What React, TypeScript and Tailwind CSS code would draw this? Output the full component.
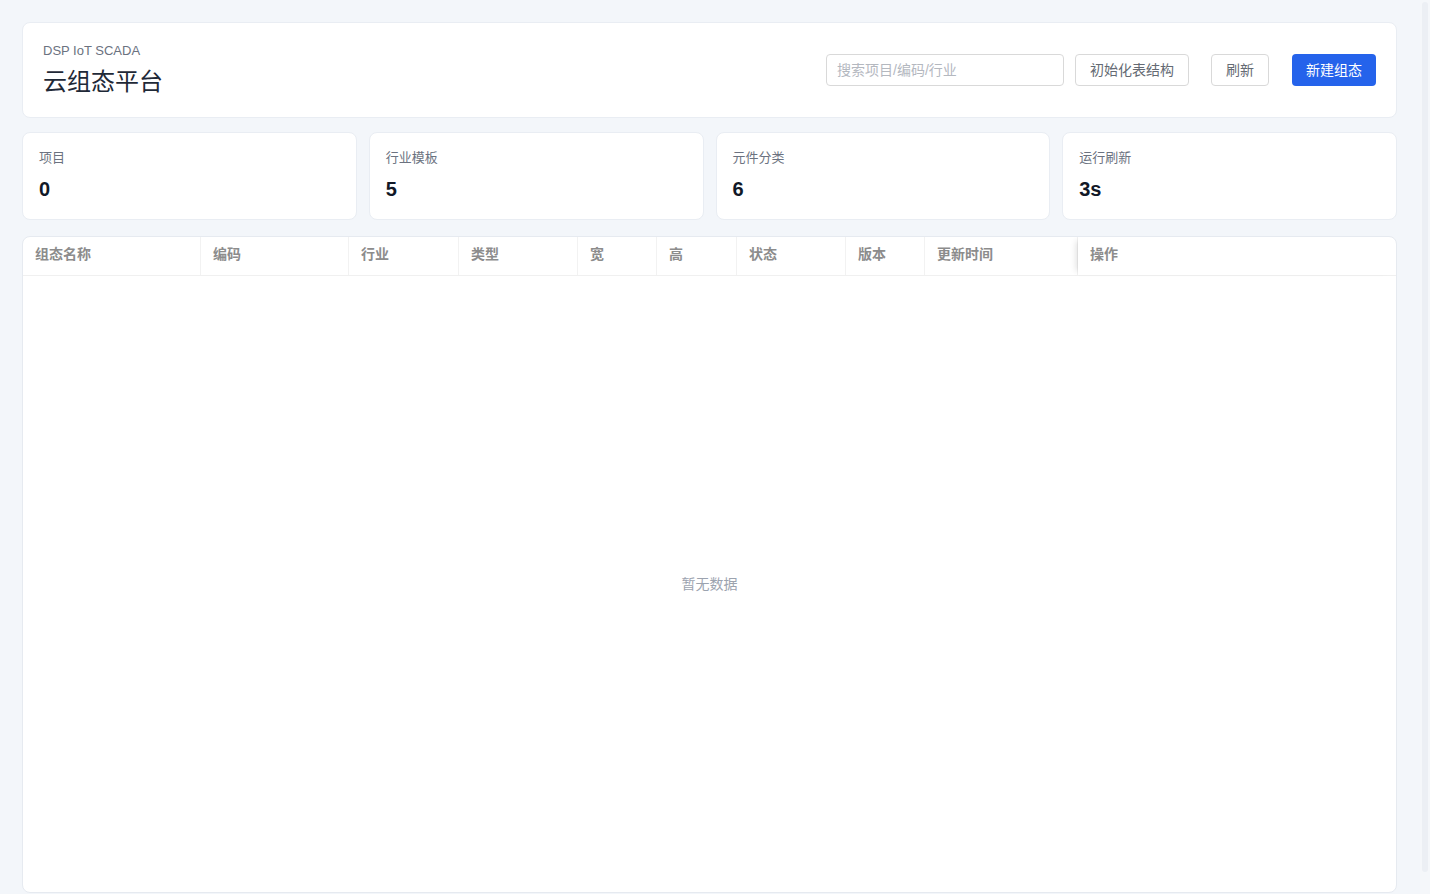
const columns = [
  { title: "组态名称", width: 178 },
  { title: "编码", width: 148 },
  { title: "行业", width: 110 },
  { title: "类型", width: 119 },
  { title: "宽", width: 79 },
  { title: "高", width: 80 },
  { title: "状态", width: 109 },
  { title: "版本", width: 79 },
  { title: "更新时间", width: 153 },
];

const stats = [
  { label: "项目", value: "0" },
  { label: "行业模板", value: "5" },
  { label: "元件分类", value: "6" },
  { label: "运行刷新", value: "3s" },
];

function StatCard({ label, value }: { label: string; value: string }) {
  return (
    <div className="flex h-[88px] flex-col rounded-lg border border-[#e9edf3] bg-white px-4 pt-[16px]">
      <div className="text-[13px] leading-[18px] text-[#6b7280]">{label}</div>
      <div className="mt-[8px] text-[20px] font-bold leading-[28px] text-[#111827]">{value}</div>
    </div>
  );
}

export default function App() {
  return (
    <div
      className="relative h-screen overflow-hidden bg-[#f3f6fa]"
      style={{ fontFamily: '"Liberation Sans", "Noto Sans CJK SC", sans-serif' }}
    >
      <div className="flex flex-col py-[22px] pl-[22px] pr-[33px]">
        {/* Header */}
        <header className="flex h-[96px] items-center justify-between rounded-lg border border-[#e9edf3] bg-white px-5">
          <div className="flex flex-col">
            <div className="text-[13px] leading-[18px] text-[#6b7280]">DSP IoT SCADA</div>
            <h1 className="mt-[6px] text-[24px] leading-[32px] text-[#1f2937]">云组态平台</h1>
          </div>
          <div className="flex items-center">
            <input
              className="h-8 w-[238px] rounded border border-[#d9d9d9] bg-white px-[10px] text-[14px] text-[#374151] outline-none placeholder:text-[#b4b8bf]"
              placeholder="搜索项目/编码/行业"
            />
            <button className="ml-[11px] h-8 rounded border border-[#d9d9d9] bg-white px-[14px] text-[14px] text-[#646a73]">
              初始化表结构
            </button>
            <button className="ml-[22px] h-8 rounded border border-[#d9d9d9] bg-white px-[14px] text-[14px] text-[#646a73]">
              刷新
            </button>
            <button className="ml-[23px] h-8 rounded bg-[#2563eb] px-[14px] text-[14px] text-white">
              新建组态
            </button>
          </div>
        </header>

        {/* Stats */}
        <section className="mt-[14px] grid grid-cols-4 gap-3">
          {stats.map((s) => (
            <StatCard key={s.label} label={s.label} value={s.value} />
          ))}
        </section>

        {/* Table */}
        <section className="mt-4 flex h-[657px] flex-col overflow-hidden rounded-lg border border-[#e6eaf0] bg-white">
          <div className="flex h-[39px] shrink-0 border-b border-[#f0f0f0]">
            {columns.map((c) => (
              <div
                key={c.title}
                className="flex items-center border-r border-[#f2f2f2] px-3 pb-[3px] text-[14px] font-bold text-[#8c8c8c]"
                style={{ width: c.width }}
              >
                {c.title}
              </div>
            ))}
            <div className="flex flex-1 items-center px-3 pb-[3px] text-[14px] font-bold text-[#8c8c8c] shadow-[-6px_0_6px_-4px_rgba(0,0,0,0.12)]">
              操作
            </div>
          </div>
          <div className="flex flex-1 items-center justify-center text-[14px] text-[#9ca3af]">暂无数据</div>
        </section>
      </div>

      {/* scrollbar */}
      <div className="absolute inset-y-0 right-0 w-[10px] bg-[#f5f7fa]">
        <div className="ml-[2px] mt-[2px] h-[870px] w-[6px] rounded-full bg-[#eceff4]" />
      </div>
    </div>
  );
}
